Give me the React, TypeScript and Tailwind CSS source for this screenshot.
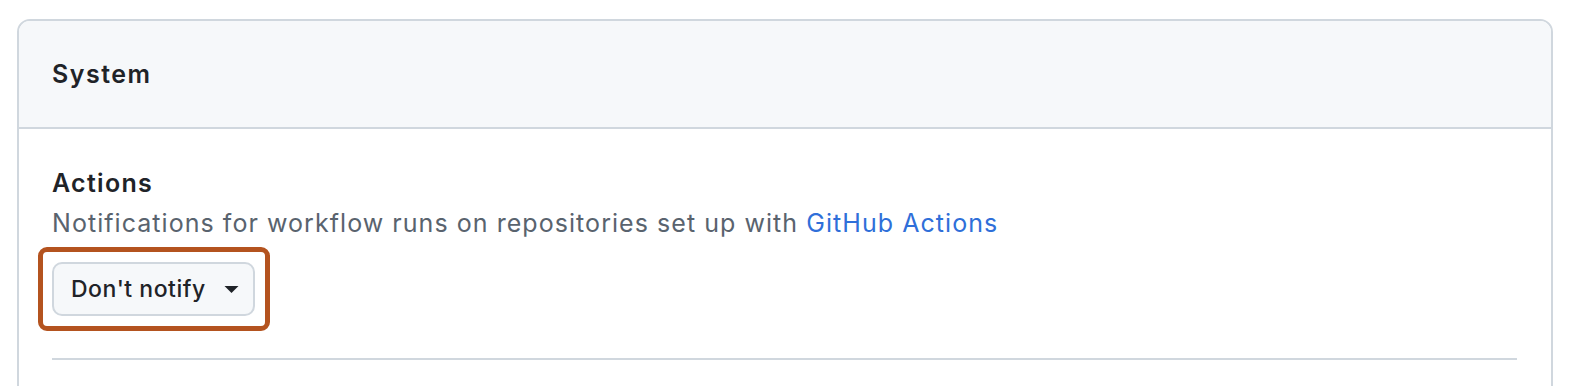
import React from "react";

export default function App() {
  return (
    <div
      className="w-[1574px] h-[386px] overflow-hidden bg-white pt-[19px] pl-[17px] pr-[21px]"
      style={{ fontFamily: "Inter, 'Noto Sans', sans-serif" }}
    >
      <div className="border-2 border-[#d0d7de] rounded-[13px] h-[420px] overflow-hidden">
        <div className="h-[108px] bg-[#f6f8fa] border-b-2 border-[#d0d7de] flex items-center px-[33px] pt-[2px]">
          <h2 className="text-[25px] font-semibold text-[#1f2328] tracking-[1.5px]">System</h2>
        </div>
        <div className="px-[33px] pt-[38px]">
          <h3 className="text-[25px] leading-[32px] font-semibold text-[#1f2328] tracking-[1.3px]">Actions</h3>
          <p className="text-[25px] leading-[36px] text-[#59636e] mt-[6px] tracking-[1.05px]">
            Notifications for workflow runs on repositories set up with{" "}
            <span className="text-[#2f6fd9]">GitHub Actions</span>
          </p>
          <div className="mt-[6px] -ml-[14px] inline-flex p-[10px] pl-[9px] border-[5px] border-[#b4531f] rounded-[9px]">
            <button className="h-[54px] w-[203px] flex items-center pl-[17px] gap-[18px] bg-[#f6f8fa] border-2 border-[#d0d7de] rounded-[10px] text-[23px] font-medium text-[#1f2328] tracking-[0.5px]">
              <span>Don't notify</span>
              <svg width="15" height="9" viewBox="0 0 15 9" className="mt-[1px]">
                <path d="M0.5 1 L14.5 1 L7.5 8 Z" fill="#1f2328" />
              </svg>
            </button>
          </div>
          <div className="mt-[27px] h-[2px] bg-[#d0d7de] mr-[1px]" />
        </div>
      </div>
    </div>
  );
}
